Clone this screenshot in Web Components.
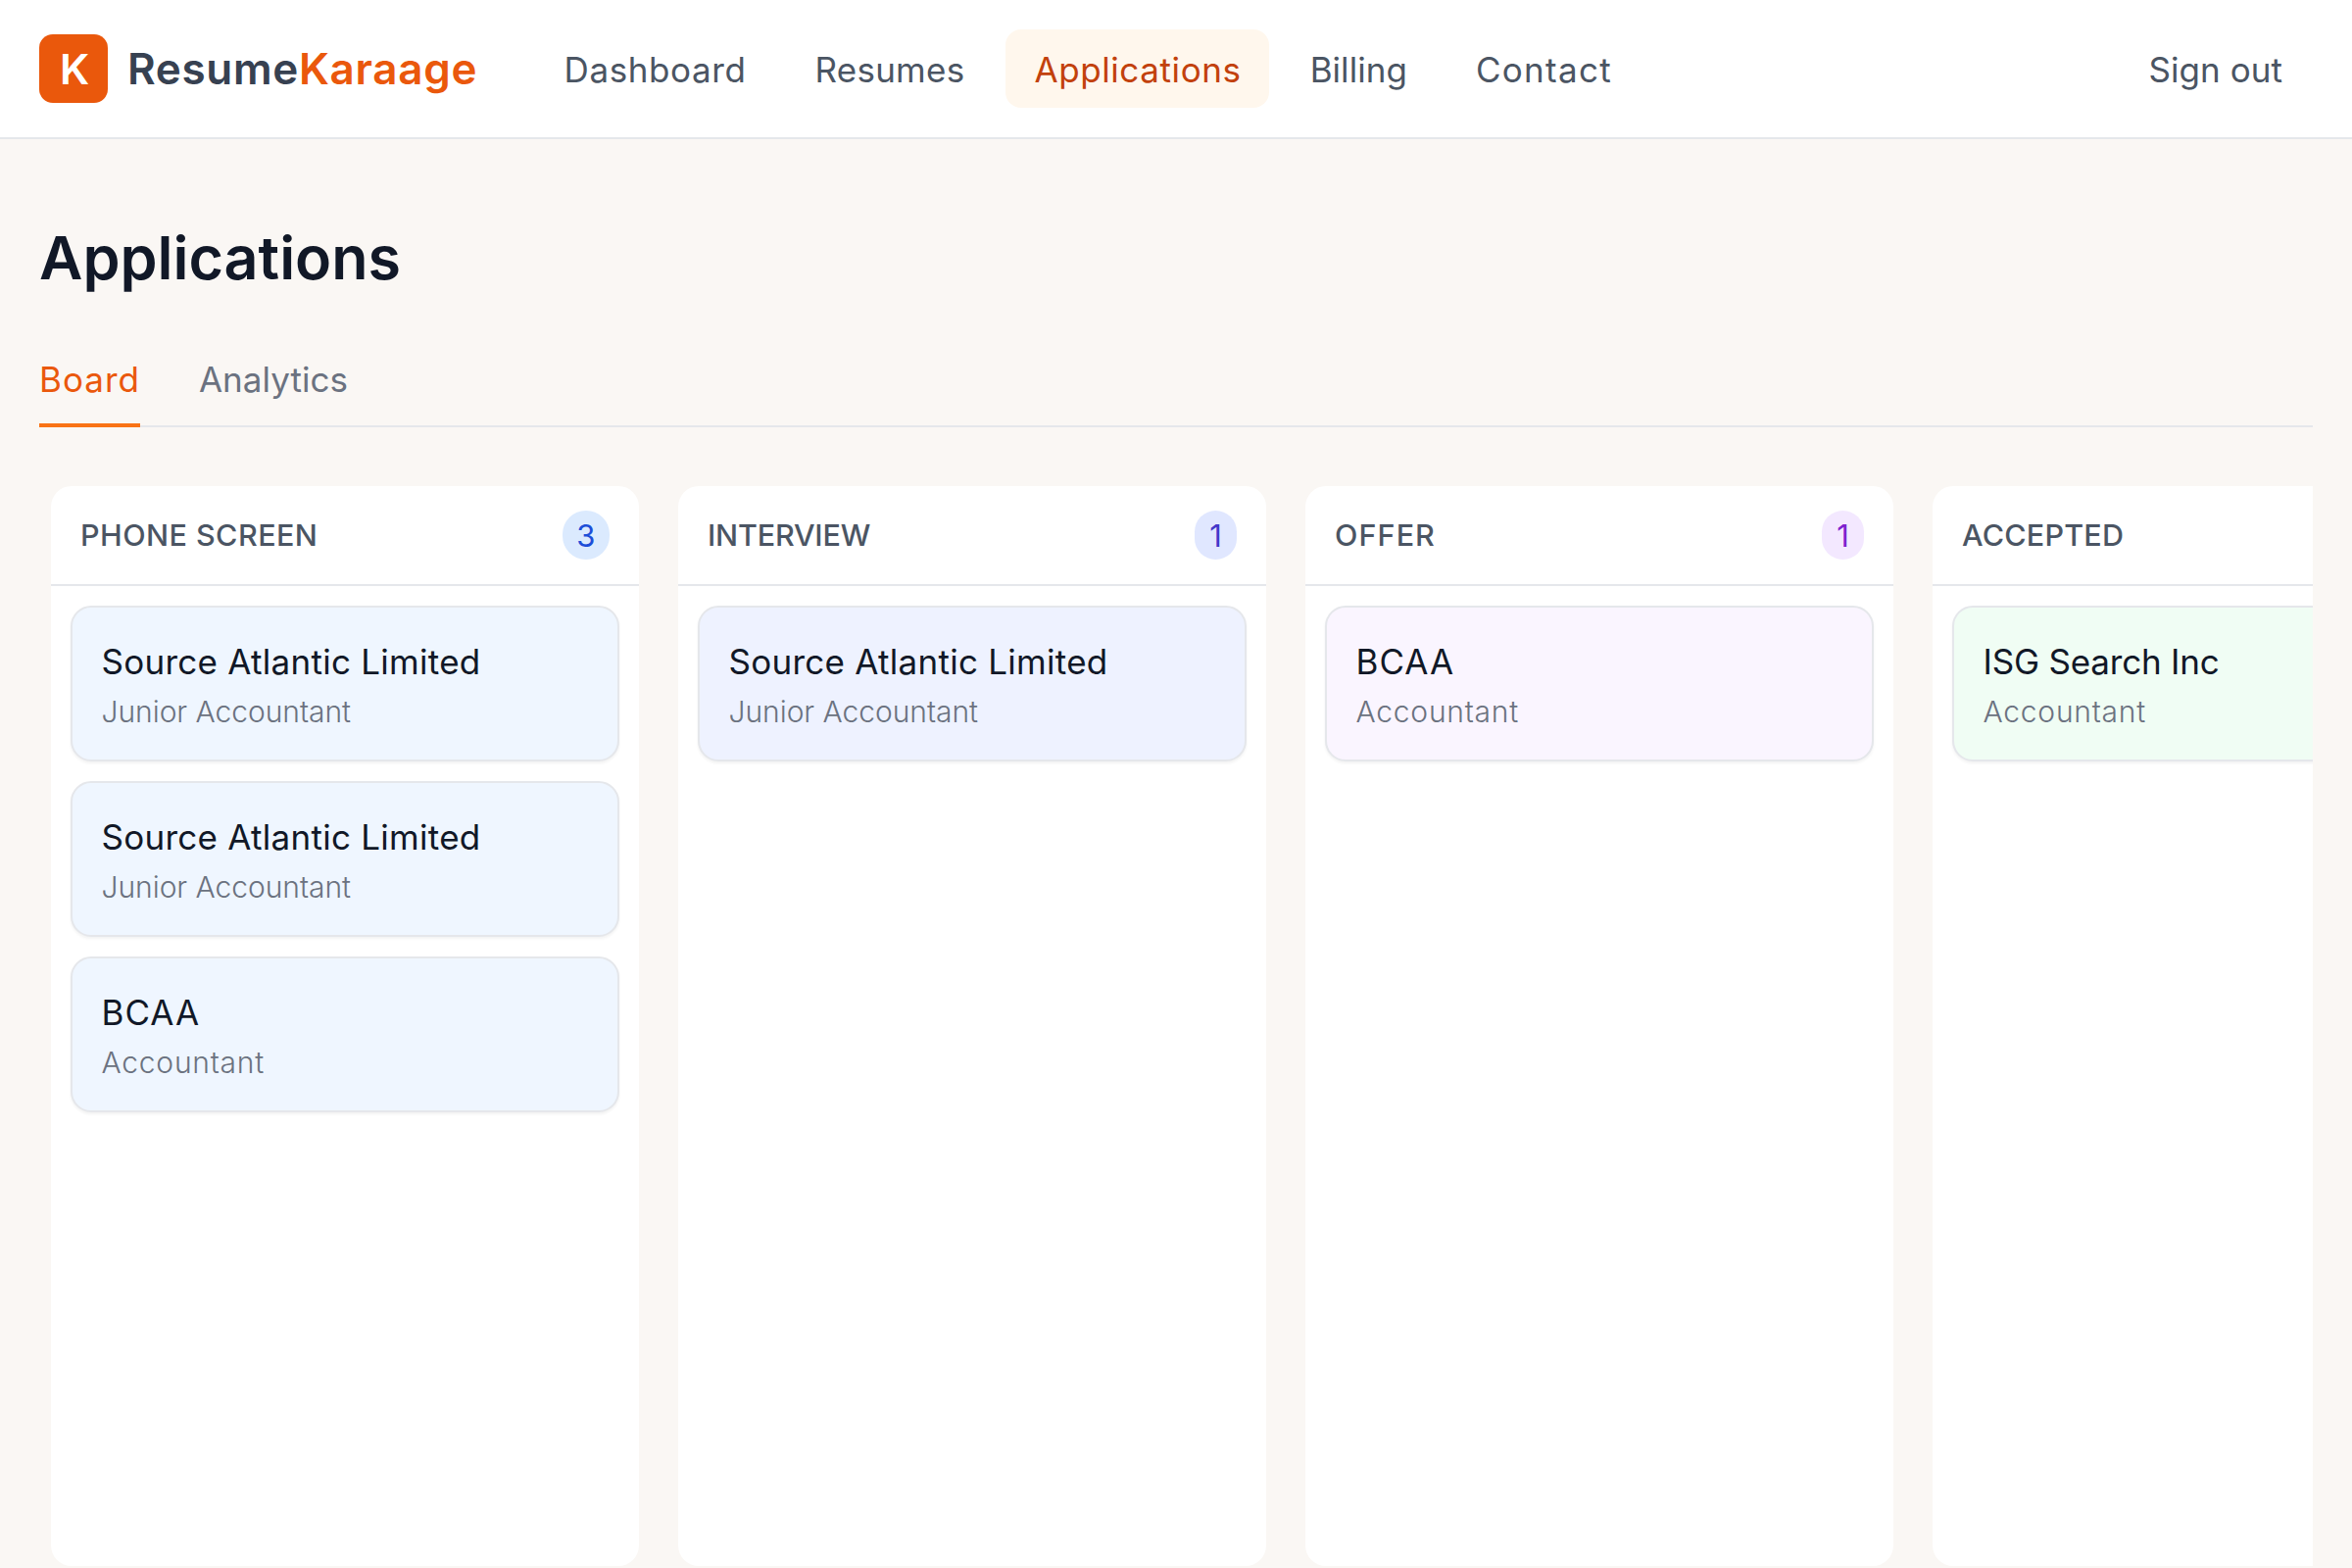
<!doctype html>
<html lang="en"><head><meta charset="utf-8"><title>Applications</title>
<style>
html,body{margin:0;padding:0;height:1600px;overflow:hidden;background:#faf7f4;font-family:Inter,"Liberation Sans",sans-serif}
</style></head><body>
<rk-app>
  <rk-nav slot="nav">
    <rk-logo slot="logo"></rk-logo>
    <rk-link style="--ls:.6px">Dashboard</rk-link>
    <rk-link style="--ls:.25px">Resumes</rk-link>
    <rk-link active style="--ls:.6px">Applications</rk-link>
    <rk-link style="--ls:.05px">Billing</rk-link>
    <rk-link style="--ls:1.3px">Contact</rk-link>
    <rk-link slot="end" style="--ls:.05px">Sign out</rk-link>
  </rk-nav>
  <rk-page slot="main" heading="Applications">
    <rk-tabs>
      <rk-tab active style="--ls:1px">Board</rk-tab>
      <rk-tab style="--ls:.05px">Analytics</rk-tab>
    </rk-tabs>
    <rk-board>
      <rk-column heading="PHONE SCREEN" count="3" tone="blue" style="--ls:.45px">
        <rk-card tone="blue" company="Source Atlantic Limited" role="Junior Accountant" cls=".27" rls="-.05"></rk-card>
        <rk-card tone="blue" company="Source Atlantic Limited" role="Junior Accountant" cls=".27" rls="-.05"></rk-card>
        <rk-card tone="blue" company="BCAA" role="Accountant" cls="1" rls=".75"></rk-card>
      </rk-column>
      <rk-column heading="INTERVIEW" count="1" tone="indigo" style="--ls:-.2px">
        <rk-card tone="indigo" company="Source Atlantic Limited" role="Junior Accountant" cls=".27" rls="-.05"></rk-card>
      </rk-column>
      <rk-column heading="OFFER" count="1" tone="purple" style="--ls:1.1px">
        <rk-card tone="purple" company="BCAA" role="Accountant" cls="1" rls=".75"></rk-card>
      </rk-column>
      <rk-column heading="ACCEPTED" tone="green" style="--ls:.2px">
        <rk-card tone="green" company="ISG Search Inc" role="Accountant" cls="-.2" rls=".75"></rk-card>
      </rk-column>
    </rk-board>
  </rk-page>
</rk-app>
<script>
function def(name, css, html){
  customElements.define(name, class extends HTMLElement{
    connectedCallback(){
      if(this.shadowRoot) return;
      const r=this.attachShadow({mode:'open'});
      r.innerHTML='<style>'+css+'</style>'+(typeof html==='function'?html(this):html);
    }
  });
}
const tones={blue:['#eff6ff','#dbeafe','#1d4ed8'],indigo:['#eef2ff','#e0e7ff','#4338ca'],purple:['#faf5ff','#f3e8ff','#7e22ce'],green:['#f0fdf4','#dcfce7','#15803d']};
def('rk-app',':host{display:flex;flex-direction:column;height:1600px;overflow:hidden}','<slot name="nav"></slot><slot name="main"></slot>');
def('rk-nav',`:host{display:flex;align-items:center;height:142px;box-sizing:border-box;background:#fff;border-bottom:2px solid #e5e7eb;padding:0 43px 0 40px;flex:none}
.links{display:flex;align-items:center;gap:14px;margin-left:60.5px}
.end{margin-left:auto}`,'<slot name="logo"></slot><div class="links"><slot></slot></div><div class="end"><slot name="end"></slot></div>');
def('rk-logo',`:host{display:flex;align-items:center;gap:20px}
.mark{width:70px;height:70px;border-radius:14px;background:#ea580c;color:#fff;display:flex;align-items:center;justify-content:center;font:600 43px Inter,sans-serif;padding-left:2px;box-sizing:border-box}
.word{font:600 44px/72px Inter,sans-serif;color:#374151;white-space:nowrap;letter-spacing:.68px}
.word b{font-weight:600;color:#ea580c}`,'<div class="mark">K</div><div class="word">Resume<b>Karaage</b></div>');
def('rk-link',`:host{display:block;height:80px;box-sizing:border-box;padding:0 28px;border-radius:16px;font:400 35px/82px Inter,sans-serif;color:#4b5563;letter-spacing:var(--ls,0);white-space:nowrap}
:host([active]){background:#fff7ed;color:#c2410c;padding:0 28px 0 29px}`,'<slot></slot>');
def('rk-page',`:host{display:block;flex:1;min-height:0;padding:0 40px}
h1{margin:0;padding-top:77px;padding-bottom:1px;font:600 61px/88px Inter,sans-serif;color:#111827}`,t=>`<h1>${t.getAttribute('heading')}</h1><slot></slot>`);
def('rk-tabs',`:host{display:flex;gap:60px;margin-top:54px;border-bottom:2px solid #e5e7eb;height:72px}`,'<slot></slot>');
def('rk-tab',`:host{display:block;height:74px;box-sizing:border-box;font:400 35px/50px Inter,sans-serif;color:#6b7280;letter-spacing:var(--ls,0)}
:host([active]){color:#ea580c;border-bottom:4px solid #f97316}`,'<slot></slot>');
def('rk-board',`:host{display:flex;gap:40px;margin-top:60px;padding-left:12px;height:1102px;overflow:hidden}`,'<slot></slot>');
def('rk-column',`:host{display:flex;flex-direction:column;flex:none;width:600px;height:1102px;border-radius:21px;background:#fff}
header{display:flex;align-items:center;justify-content:space-between;box-sizing:border-box;height:102px;padding:0 30px;border-bottom:2px solid #e5e7eb}
h2{margin:0;font:550 30.5px/1 Inter,sans-serif;color:#4b5563;letter-spacing:var(--ls,0)}
.n{box-sizing:border-box;height:50px;min-width:43px;padding:0 14.5px;border-radius:25px;display:flex;align-items:center;justify-content:center;font:400 31px/1 Inter,sans-serif;background:var(--b);color:var(--c)}
.cards{display:flex;flex-direction:column;gap:20.5px;padding:20px}`,
t=>{const c=tones[t.getAttribute('tone')],k=t.getAttribute('count');return `<header style="--b:${c[1]};--c:${c[2]}"><h2>${t.getAttribute('heading')}</h2>${k?`<span class="n">${k}</span>`:''}</header><div class="cards"><slot></slot></div>`});
def('rk-card',`:host{display:block;box-sizing:border-box;height:158.5px;padding:29.5px 29.5px 0;border:2px solid #e5e7eb;border-radius:21px;box-shadow:0 2px 3px rgba(0,0,0,.05)}
.co{font:400 35px/50px Inter,sans-serif;color:#111827;white-space:nowrap}
.ro{margin-top:4px;font:350 30px/44px Inter,sans-serif;color:#6b7280;white-space:nowrap}`,
t=>{t.style.background=tones[t.getAttribute('tone')][0];return `<div class="co" style="letter-spacing:${t.getAttribute('cls')}px">${t.getAttribute('company')}</div><div class="ro" style="letter-spacing:${t.getAttribute('rls')}px">${t.getAttribute('role')}</div>`});
</script>
</body></html>
